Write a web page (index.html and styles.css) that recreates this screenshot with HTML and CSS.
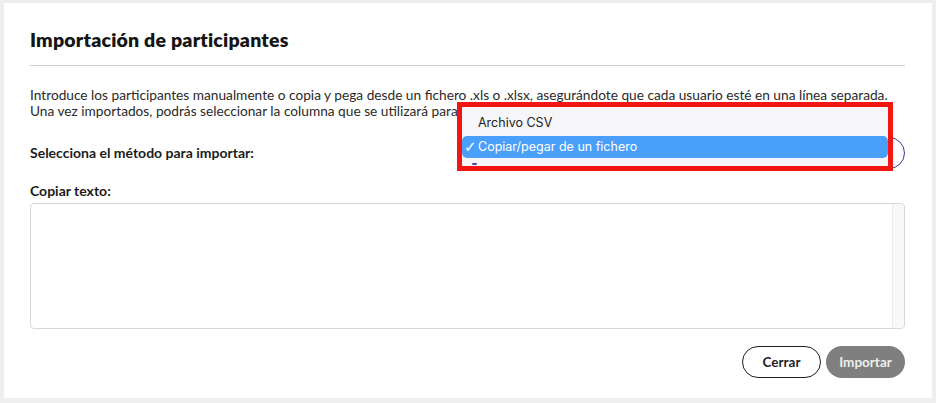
FILE: index.html
```
<!DOCTYPE html>
<html lang="es">
<head>
<meta charset="utf-8">
<title>Importación de participantes</title>
<link rel="stylesheet" href="styles.css">
</head>
<body>
<div class="card">
  <h1 class="title">Importación de participantes</h1>
  <div class="divider"></div>
  <p class="intro">Introduce los participantes manualmente o copia y pega desde un fichero .xls o .xlsx, asegurándote que cada usuario esté en una línea separada.<br>Una vez importados, podrás seleccionar la columna que se utilizará para</p>
  <div class="method-row">
    <label class="label">Selecciona el método para importar:</label>
    <div class="select"></div>
  </div>
  <label class="label copy-label">Copiar texto:</label>
  <div class="textarea"><div class="track"></div></div>
  <div class="actions">
    <button class="btn btn-outline">Cerrar</button>
    <button class="btn btn-fill">Importar</button>
  </div>
  <div class="popup-frame">
    <div class="popup">
      <div class="option">Archivo CSV</div>
      <div class="option selected"><span class="check">✓</span>Copiar/pegar de un fichero</div>
      <div class="peek"></div>
    </div>
  </div>
</div>
</body>
</html>
```
FILE: styles.css
```
html, body {
  margin: 0;
  padding: 0;
}
body {
  background: #eeeeee;
  font-family: Lato, "Noto Sans", sans-serif;
  color: #222;
  width: 936px;
  height: 403px;
  overflow: hidden;
}
.card {
  position: relative;
  box-sizing: border-box;
  margin: 3px 4px 0 4px;
  width: 928px;
  height: 395px;
  background: #fff;
  padding: 25px 27px 0 26px;
  display: flex;
  flex-direction: column;
}
.title {
  margin: 0;
  font-size: 19.5px;
  line-height: 24px;
  font-weight: 800;
  color: #151515;
  letter-spacing: 0.2px;
}
.divider {
  height: 1px;
  background: #cfcfcf;
  margin-top: 13px;
}
.intro {
  margin: 21px 0 0 0;
  font-size: 13.7px;
  line-height: 16px;
  color: #2a2a2a;
  white-space: nowrap;
  overflow: hidden;
}
.method-row {
  margin-top: 18px;
  display: flex;
  align-items: center;
  justify-content: space-between;
  height: 32px;
}
.label {
  font-size: 14px;
  font-weight: 700;
  color: #1c1c1c;
  line-height: 16px;
}
.select {
  box-sizing: border-box;
  width: 445px;
  height: 32px;
  border: 1.5px solid #3b3b9e;
  border-radius: 16px;
}
.copy-label {
  margin-top: 14px;
  display: block;
}
.textarea {
  margin-top: 4px;
  box-sizing: border-box;
  height: 126px;
  border: 1px solid #d8d8d8;
  border-radius: 4px;
  display: flex;
  justify-content: flex-end;
}
.track {
  width: 11px;
  background: #f8f8f8;
  border-left: 1px solid #ececec;
  border-radius: 0 3px 3px 0;
}
.actions {
  margin-top: 17px;
  display: flex;
  justify-content: flex-end;
  gap: 5px;
}
.btn {
  box-sizing: border-box;
  width: 79px;
  height: 32px;
  border-radius: 16px;
  font-family: Lato, "Noto Sans", sans-serif;
  font-size: 13.5px;
  font-weight: 700;
  padding: 0;
}
.btn-outline {
  background: #fff;
  border: 1px solid #1e1e1e;
  color: #1e1e1e;
}
.btn-fill {
  background: #7f7f7f;
  border: none;
  color: #eeeeee;
}
.popup-frame {
  position: absolute;
  left: 453px;
  top: 99px;
  width: 436px;
  height: 69px;
  box-sizing: border-box;
  border: 5px solid #f3150f;
}
.popup {
  background: #f6f6f8;
  height: 100%;
  padding-top: 5px;
  box-sizing: border-box;
  font-family: Inter, "Liberation Sans", sans-serif;
  font-size: 12.5px;
  color: #222;
  overflow: hidden;
}
.option {
  height: 22px;
  line-height: 22px;
  padding-left: 16px;
  position: relative;
}
.option + .option {
  margin-top: 2px;
}
.selected {
  background: #4a9ffb;
  color: #fff;
  border-radius: 5px;
}
.check {
  position: absolute;
  left: 2px;
  top: 0;
  font-size: 15px;
  font-family: "DejaVu Sans", sans-serif;
}
.peek {
  margin: 5px 0 0 10px;
  width: 5px;
  height: 2px;
  background: #4a4ab0;
  border-radius: 1px;
}
```
